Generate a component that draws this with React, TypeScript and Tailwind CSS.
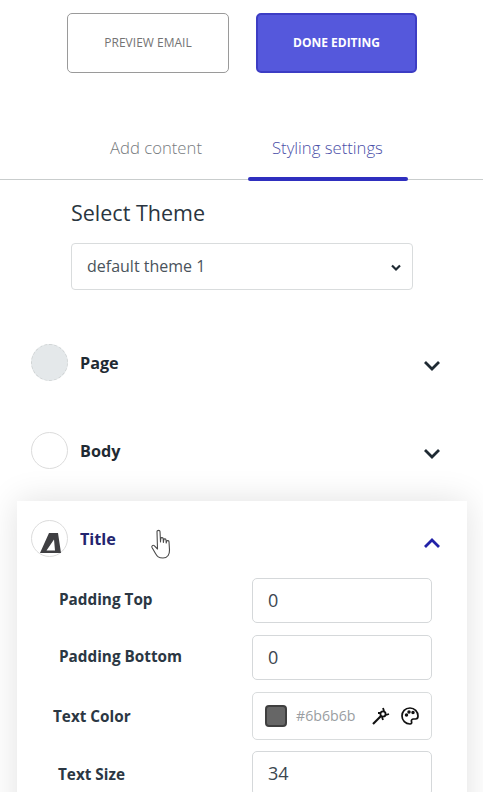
import React from "react";

function Chevron({ up = false, color = "#1f2a33" }: { up?: boolean; color?: string }) {
  return (
    <svg width="18" height="12" viewBox="0 0 18 12" fill="none">
      <path d={up ? "M2 10 L9 3 L16 10" : "M2 2 L9 9 L16 2"} stroke={color} strokeWidth="2.8" />
    </svg>
  );
}

function Section({ name, circle, color = "#1f2a33", chevron = "#1f2a33", up = false, mt }: { name: string; circle: React.ReactNode; color?: string; chevron?: string; up?: boolean; mt: string }) {
  return (
    <div className={`flex items-center pl-[31px] pr-[42px] ${mt}`}>
      {circle}
      <span className="ml-[12px] text-[16.2px] font-bold leading-[22px]" style={{ color }}>{name}</span>
      <span className={`ml-auto flex ${up ? "mt-[8px]" : "mt-[6px]"}`}><Chevron up={up} color={chevron} /></span>
    </div>
  );
}

function Field({ label, value, labelClass, mt }: { label: string; value: string; labelClass: string; mt: string }) {
  return (
    <div className={`flex items-center ${mt}`}>
      <span className={`text-[15.3px] font-bold text-[#2b3743] ${labelClass}`}>{label}</span>
      <div className="ml-auto flex h-[45px] w-[180px] items-center rounded-[5px] border border-[#d5d8da] pl-[15px] text-[18px] text-[#3b4650]">{value}</div>
    </div>
  );
}

export default function App() {
  return (
    <div className="h-[792px] w-[483px] overflow-hidden bg-white font-['Open_Sans',sans-serif]">
      <div className="flex gap-[27px] pl-[67px] pt-[13px]">
        <div className="flex h-[60px] w-[162px] items-center justify-center rounded-[5px] border-[1.5px] border-[#9a9a9a] pb-[1px] text-[12px] font-medium text-[#737373]">PREVIEW EMAIL</div>
        <div className="flex h-[60px] w-[161px] items-center justify-center rounded-[5px] border-2 border-[#3d3dc4] bg-[#5558dc] pb-[1px] text-[12px] font-bold text-white">DONE EDITING</div>
      </div>

      <div className="relative mt-[45px] flex h-[62px] border-b border-[#c9cdcd] pl-[110px] pt-[18px] text-[16.7px] font-light leading-[24px]">
        <span className="text-[#777b80]">Add content</span>
        <span className="ml-[70px] text-[#4a4fa8]">Styling settings</span>
        <div className="absolute left-[248px] top-[59px] h-[4px] w-[160px] rounded-[2px] bg-[#2f2fbf]" />
      </div>

      <div className="pl-[71px] pt-[17px]">
        <div className="text-[21.5px] leading-[32px] text-[#2a3540]">Select Theme</div>
        <div className="mt-[14px] flex h-[47px] w-[342px] items-center justify-between rounded-[4px] border border-[#d9dcdd] pl-[15px] pr-[11px] text-[16px] text-[#4a535b]">
          <span className="-mt-[2px]">default theme 1</span>
          <svg width="10" height="8" viewBox="0 0 10 8" fill="none" className="mt-[3px]"><path d="M1 1.5 L5 5.5 L9 1.5" stroke="#1f2a33" strokeWidth="2.2" /></svg>
        </div>
      </div>

      <Section name="Page" mt="mt-[54px]" circle={<div className="h-[37px] w-[37px] rounded-full border border-dashed border-[#cfd3d4] bg-[#e4e8ea]" />} />
      <Section name="Body" mt="mt-[51px]" circle={<div className="h-[37px] w-[37px] rounded-full border border-[#dcdcdc] bg-white" />} />

      <div className="relative ml-[17px] mt-[32px] h-[400px] w-[450px] bg-white shadow-[0_0_32px_rgba(0,0,0,0.12)]">
        <div className="-ml-[17px] w-[483px] pt-[19px]">
          <Section
            name="Title"
            color="#23246e"
            chevron="#2222a8"
            up
            mt="mt-0"
            circle={
              <div className="relative h-[37px] w-[37px] rounded-full border border-[#dcdcdc] bg-white">
                <svg width="37" height="37" viewBox="0 0 37 37" className="absolute left-[-1px] top-[-1px]">
                  <path fillRule="evenodd" d="M18 13 L27 13 L30 33 L9 33 Z M23 19.5 L15.5 30.5 L24 30.5 Z" fill="#3f3f42" />
                </svg>
              </div>
            }
          />
          <div className="absolute left-[133px] top-[28px]">
            <svg width="22" height="31" viewBox="0 0 22 31" fill="#fff" stroke="#4a4a4a" strokeWidth="1.1" strokeLinejoin="round">
              <path d="M7 2.5 C7 1 10 1 10 2.5 L10.5 13 L10.8 9.5 C11 8.2 13.2 8.4 13.2 9.8 L13.4 13.5 L13.8 10.6 C14 9.5 16 9.7 16 11 L16.2 14 L16.7 12.2 C17 11.2 19 11.5 19 12.8 L19.5 21 C19.6 25 18 29 13 29 C8.5 29 7.2 27.5 5.5 24.5 L2 18.5 C1.2 17 3 15.6 4.2 16.7 L7.5 20 Z" />
            </svg>
          </div>
        </div>

        <div className="pl-[36px] pr-[35px]">
          <Field label="Padding Top" value="0" labelClass="ml-[6px] -mt-[3px]" mt="mt-[21px]" />
          <Field label="Padding Bottom" value="0" labelClass="ml-[6px] -mt-[2px]" mt="mt-[12px]" />
          <div className="mt-[12px] flex items-center">
            <span className="text-[15.3px] font-bold text-[#2b3743]">Text Color</span>
            <div className="ml-auto flex h-[48px] w-[180px] items-center rounded-[5px] border border-[#d9dcdd] pl-[12px] pr-[11px]">
              <div className="h-[22px] w-[22px] rounded-[4px] border-2 border-[#3f3f3f] bg-[#666666]" />
              <span className="ml-[9px] text-[14.2px] text-[#9a9ea2]">#6b6b6b</span>
              <svg width="20" height="20" viewBox="0 0 20 20" fill="none" stroke="#111" strokeWidth="1.8" className="ml-auto">
                <circle cx="12" cy="8" r="2.6" />
                <path d="M12 2 L13 5 M18 8 L15 9 M12 14 L11 11 M7 7 L9.5 7" />
                <path d="M10 10 L2 18" strokeWidth="2.2" />
              </svg>
              <svg width="20" height="20" viewBox="0 0 20 20" fill="none" stroke="#111" strokeWidth="1.7" className="ml-[9px]">
                <path d="M10 2 C5 2 2 5.5 2 10 C2 14.5 5.5 18 10 18 C11.5 18 12 16.8 11.5 15.7 C11 14.4 11.8 13 13.5 13 L15.5 13 C17.2 13 18 11.8 18 10 C18 5.5 14.5 2 10 2 Z" />
                <circle cx="6.5" cy="9" r="0.9" fill="#111" />
                <circle cx="9" cy="6" r="0.9" fill="#111" />
                <circle cx="13" cy="6.5" r="0.9" fill="#111" />
              </svg>
            </div>
          </div>
          <div className="mt-[11px] flex items-center">
            <span className="ml-[5px] mt-[2px] text-[15.3px] font-bold text-[#2b3743]">Text Size</span>
            <div className="ml-auto flex h-[45px] w-[180px] items-center rounded-[5px] border border-[#d5d8da] pl-[15px] text-[18px] text-[#3b4650]">34</div>
          </div>
        </div>
      </div>
    </div>
  );
}
